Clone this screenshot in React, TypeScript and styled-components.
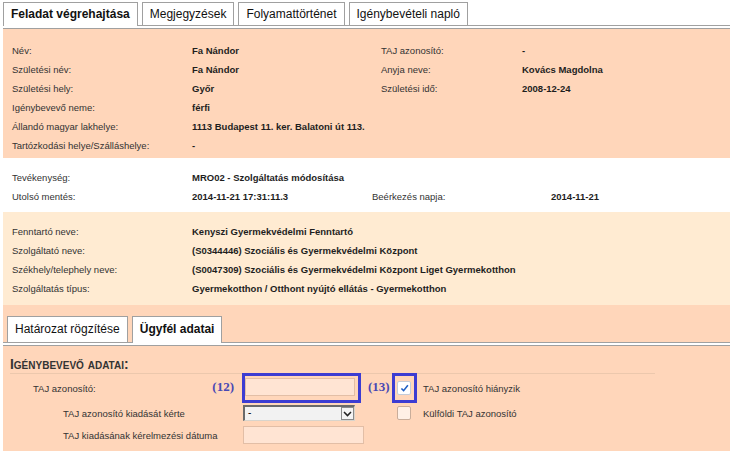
import styled, { createGlobalStyle } from "styled-components";

const GlobalStyle = createGlobalStyle`
  html, body {
    margin: 0;
    padding: 0;
    background: #fff;
  }
  body {
    font-family: "Liberation Sans", Arial, sans-serif;
    color: #333;
  }
`;

const SALMON = "#ffd6ba";
const CREAM = "#ffebd2";
const WHITE = "#ffffff";

const Page = styled.div`
  width: 730px;
  height: 451px;
  overflow: hidden;
  padding: 2px 0 0 3px;
  box-sizing: border-box;
`;

const TabStrip = styled.div<{ $inset?: number }>`
  display: flex;
  align-items: flex-end;
  gap: 4px;
  padding-left: ${(p) => p.$inset ?? 0}px;
  border-bottom: 1px solid #a0a0a0;
`;

const Tab = styled.div<{ $active?: boolean; $h: number }>`
  height: ${(p) => p.$h}px;
  line-height: ${(p) => p.$h}px;
  padding: 0 7px ${(p) => (p.$active ? 1 : 0)}px;
  margin-bottom: ${(p) => (p.$active ? -1 : 0)}px;
  border: 1px solid #a0a0a0;
  border-bottom: none;
  background: #fff;
  font-size: 12px;
  color: #111;
  font-weight: ${(p) => (p.$active ? 700 : 400)};
  white-space: nowrap;
`;

const TabGap = styled.div`
  height: 2px;
  background: #fff;
`;

const Panel = styled.div`
  border-top: 1px solid #a0a0a0;
  background: ${SALMON};
`;

const InfoSection = styled.div<{ $bg: string; $pt: number; $pb: number }>`
  background: ${(p) => p.$bg};
  padding: ${(p) => p.$pt}px 0 ${(p) => p.$pb}px 9px;
`;

const InfoRow = styled.div<{ $cols: string }>`
  display: grid;
  grid-template-columns: ${(p) => p.$cols};
  height: 19px;
  align-items: center;
  font-size: 9.5px;
`;

const Label = styled.div`
  color: #333;
  white-space: nowrap;
`;

const Value = styled.div`
  color: #1e1e1e;
  font-weight: 700;
  white-space: nowrap;
`;

const Lower = styled.div`
  background: ${SALMON};
  padding-top: 11px;
`;

const FormPanel = styled.div`
  border-top: 1px solid #a0a0a0;
  background: ${SALMON};
  height: 120px;
`;

const Heading = styled.div`
  margin-left: 7px;
  width: 645px;
  padding-top: 11px;
  line-height: 16px;
  font-size: 13.8px;
  font-weight: 700;
  font-variant: small-caps;
  color: #333;
  border-bottom: 1px solid #ecc8ad;
`;

const FormRow = styled.div<{ $h: number; $mt?: number }>`
  display: grid;
  grid-template-columns: 239px 126px 24px 31px 1fr;
  align-items: center;
  height: ${(p) => p.$h}px;
  margin-top: ${(p) => p.$mt ?? 0}px;
  font-size: 9.5px;
`;

const FieldLabel = styled.div<{ $indent: number }>`
  display: flex;
  align-items: center;
  justify-content: space-between;
  padding: 0 8px 0 ${(p) => p.$indent}px;
  white-space: nowrap;
  color: #333;
`;

const Marker = styled.span`
  font-family: "Liberation Serif", "Times New Roman", serif;
  font-size: 13px;
  font-weight: 700;
  color: #4848b4;
  margin-top: -3px;
`;

const HighlightBox = styled.div<{ $w: number }>`
  width: ${(p) => p.$w}px;
  height: 30px;
  box-sizing: border-box;
  border: 3px solid #3c3cd2;
  padding: 2px 0 0 0;
`;

const CheckHighlight = styled(HighlightBox)`
  display: flex;
  align-items: center;
  padding: 0 0 0 2px;
`;

const TextInput = styled.div<{ $w: number; $h: number; $ml?: number }>`
  width: ${(p) => p.$w}px;
  height: ${(p) => p.$h}px;
  margin-left: ${(p) => p.$ml ?? 0}px;
  box-sizing: border-box;
  background: #ffe4d3;
  border: 1px solid #e2bea6;
`;

const Select = styled.div`
  position: relative;
  width: 112px;
  height: 16px;
  margin-left: 1px;
  box-sizing: border-box;
  background: #f2f2f2;
  border-top: 2px solid #6a6a6a;
  border-left: 2px solid #6a6a6a;
  border-right: 1px solid #d8d4cc;
  border-bottom: 1px solid #d8d4cc;
  font-size: 10px;
  line-height: 12px;
  padding-left: 3px;
  color: #000;
`;

const SelectButton = styled.div`
  position: absolute;
  top: 0;
  right: 0;
  width: 13px;
  height: 13px;
  box-sizing: border-box;
  border: 1px solid #8a8a8a;
  background: #f4f4f4;
  display: flex;
  align-items: center;
  justify-content: center;
`;

const CheckBox = styled.div<{ $checked?: boolean; $ml?: number }>`
  width: 14px;
  height: 14px;
  margin-left: ${(p) => p.$ml ?? 0}px;
  box-sizing: border-box;
  border-radius: 2px;
  border: 1px solid ${(p) => (p.$checked ? "#c4ccd8" : "#c9ad9a")};
  background: ${(p) => (p.$checked ? "#fff" : "#fff0e6")};
  display: flex;
  align-items: center;
  justify-content: center;
`;

const CheckLabel = styled.div`
  white-space: nowrap;
  color: #333;
`;

type Pair = [string, string];

const personRows: Pair[][] = [
  [["Név:", "Fa Nándor"], ["TAJ azonosító:", "-"]],
  [["Születési név:", "Fa Nándor"], ["Anyja neve:", "Kovács Magdolna"]],
  [["Születési hely:", "Győr"], ["Születési idő:", "2008-12-24"]],
  [["Igénybevevő neme:", "férfi"]],
  [["Állandó magyar lakhelye:", "1113 Budapest 11. ker. Balatoni út 113."]],
  [["Tartózkodási helye/Szálláshelye:", "-"]],
];

const activityRows: Pair[][] = [
  [["Tevékenység:", "MRO02 - Szolgáltatás módosítása"]],
  [["Utolsó mentés:", "2014-11-21 17:31:11.3"], ["Beérkezés napja:", "2014-11-21"]],
];

const providerRows: Pair[][] = [
  [["Fenntartó neve:", "Kenyszi Gyermekvédelmi Fenntartó"]],
  [["Szolgáltató neve:", "(S0344446) Szociális és Gyermekvédelmi Központ"]],
  [["Székhely/telephely neve:", "(S0047309) Szociális és Gyermekvédelmi Központ Liget Gyermekotthon"]],
  [["Szolgáltatás típus:", "Gyermekotthon / Otthont nyújtó ellátás - Gyermekotthon"]],
];

function Rows({ rows, cols }: { rows: Pair[][]; cols: string }) {
  return (
    <>
      {rows.map((row, i) => (
        <InfoRow key={i} $cols={row.length > 1 ? cols : "180px 1fr"}>
          {row.map(([l, v]) => [
            <Label key={l}>{l}</Label>,
            <Value key={l + "v"}>{v}</Value>,
          ])}
        </InfoRow>
      ))}
    </>
  );
}

const Check = () => (
  <svg width="9" height="8" viewBox="0 0 10 9">
    <path d="M1.5 5 L4 7.5 L8.8 1.5" fill="none" stroke="#1f5fc4" strokeWidth="1.8" />
  </svg>
);

const Chevron = () => (
  <svg width="9" height="6" viewBox="0 0 9 6">
    <path d="M1 1 L4.5 4.6 L8 1" fill="none" stroke="#222" strokeWidth="1.5" />
  </svg>
);

export default function App() {
  return (
    <>
      <GlobalStyle />
      <Page>
        <TabStrip>
          <Tab $h={22} $active>
            Feladat végrehajtása
          </Tab>
          <Tab $h={22}>Megjegyzések</Tab>
          <Tab $h={22}>Folyamattörténet</Tab>
          <Tab $h={22}>Igénybevételi napló</Tab>
        </TabStrip>
        <TabGap />
        <Panel>
          <InfoSection $bg={SALMON} $pt={12} $pb={3}>
            <Rows rows={personRows} cols="180px 189px 141px 1fr" />
          </InfoSection>
          <InfoSection $bg={WHITE} $pt={10} $pb={6}>
            <Rows rows={activityRows} cols="180px 180px 179px 1fr" />
          </InfoSection>
          <InfoSection $bg={CREAM} $pt={10} $pb={7}>
            <Rows rows={providerRows} cols="180px 1fr" />
          </InfoSection>
          <Lower>
            <TabStrip $inset={4}>
              <Tab $h={25}>Határozat rögzítése</Tab>
              <Tab $h={25} $active>
                Ügyfél adatai
              </Tab>
            </TabStrip>
            <TabGap />
            <FormPanel>
              <Heading>Igénybevevő adatai:</Heading>
              <FormRow $h={30} $mt={-1}>
                <FieldLabel $indent={30}>
                  <span>TAJ azonosító:</span>
                  <Marker>(12)</Marker>
                </FieldLabel>
                <HighlightBox $w={119}>
                  <TextInput $w={110} $h={18} />
                </HighlightBox>
                <Marker>(13)</Marker>
                <CheckHighlight $w={25}>
                  <CheckBox $checked>
                    <Check />
                  </CheckBox>
                </CheckHighlight>
                <CheckLabel>TAJ azonosító hiányzik</CheckLabel>
              </FormRow>
              <FormRow $h={20}>
                <FieldLabel $indent={60}>
                  <span>TAJ azonosító kiadását kérte</span>
                </FieldLabel>
                <Select>
                  -
                  <SelectButton>
                    <Chevron />
                  </SelectButton>
                </Select>
                <span />
                <CheckBox $ml={5} />
                <CheckLabel>Külföldi TAJ azonosító</CheckLabel>
              </FormRow>
              <FormRow $h={24}>
                <FieldLabel $indent={60}>
                  <span>TAJ kiadásának kérelmezési dátuma</span>
                </FieldLabel>
                <TextInput $w={121} $h={18} $ml={1} />
              </FormRow>
            </FormPanel>
          </Lower>
        </Panel>
      </Page>
    </>
  );
}
